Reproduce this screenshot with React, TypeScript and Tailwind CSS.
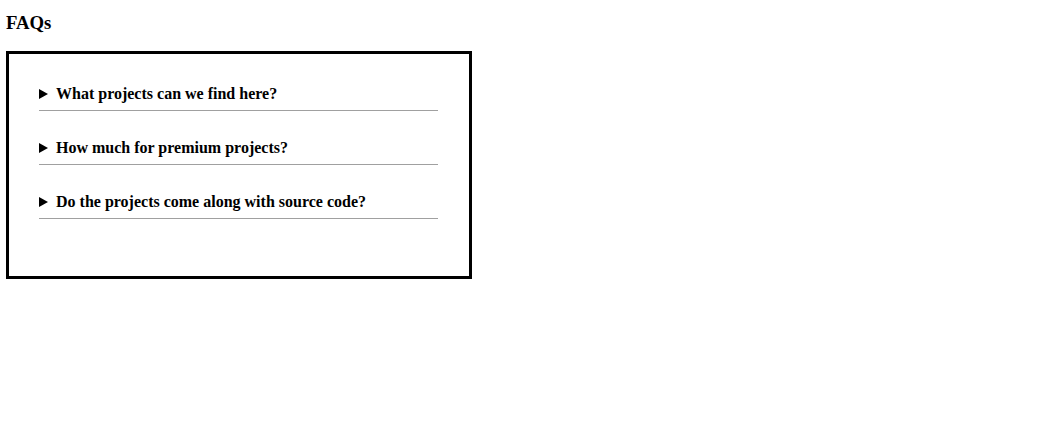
import React from "react";

const faqs = [
  "What projects can we find here?",
  "How much for premium projects?",
  "Do the projects come along with source code?",
];

const App: React.FC = () => {
  return (
    <div className="min-h-screen bg-white px-[6px] text-black font-['Liberation_Serif',serif]">
      <h3 className="mt-[12px] mb-[18px] text-[18.72px] leading-[21px] font-bold">FAQs</h3>

      <div className="w-[466px] border-[3px] border-black pl-[30px] pr-[31px] pt-[3px] pb-[57px]">
        {faqs.map((q) => (
          <details key={q} className="border-b border-[#a0a0a0] pt-[28px] pb-[7px]">
            <summary className="flex items-center list-none cursor-pointer text-[16px] leading-[18px] font-bold [&::-webkit-details-marker]:hidden">
              <svg className="w-[9px] h-[10px] mr-[8px] shrink-0" viewBox="0 0 9 10">
                <polygon points="0,0 9,5 0,10" fill="black" />
              </svg>
              {q}
            </summary>
          </details>
        ))}
      </div>
    </div>
  );
};

export default App;
